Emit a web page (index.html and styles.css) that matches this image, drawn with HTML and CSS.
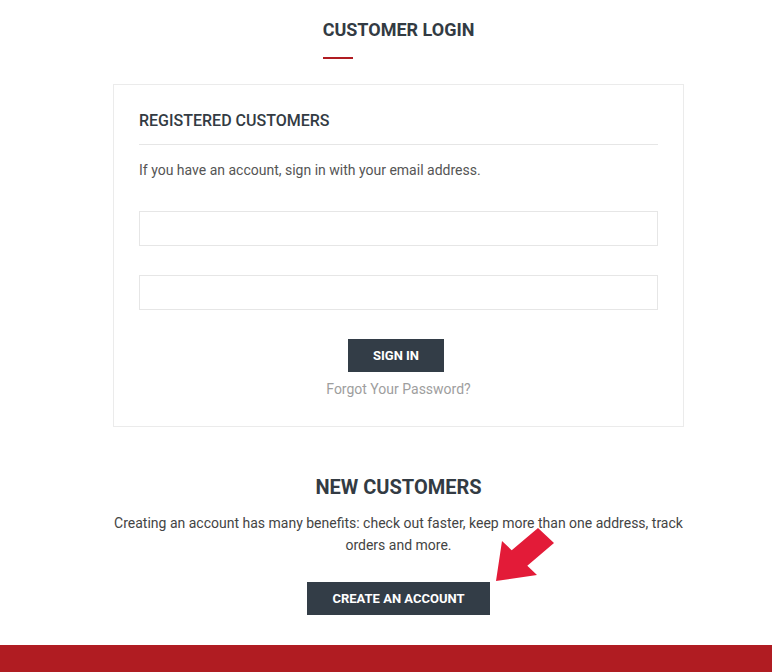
FILE: index.html
```html
<!DOCTYPE html>
<html>
<head>
<meta charset="utf-8">
<link rel="stylesheet" href="styles.css">
</head>
<body>
<main class="page">
  <div class="title-wrap">
    <h1 class="page-title">CUSTOMER LOGIN</h1>
  </div>
  <section class="login-box">
    <h2 class="box-title">REGISTERED CUSTOMERS</h2>
    <p class="box-note">If you have an account, sign in with your email address.</p>
    <div class="field"><input class="input" type="email" aria-label="Email"></div>
    <div class="field"><input class="input" type="password" aria-label="Password"></div>
    <div class="actions">
      <button class="btn btn-signin">SIGN IN</button>
      <a class="forgot" href="#">Forgot Your Password?</a>
    </div>
  </section>
  <section class="new-customers">
    <h2 class="new-title">NEW CUSTOMERS</h2>
    <p class="new-text">Creating an account has many benefits: check out faster, keep more than one address, track orders and more.</p>
    <div class="create-wrap">
      <button class="btn btn-create">CREATE AN ACCOUNT</button>
      <svg class="arrow" width="80" height="70" viewBox="0 0 80 70" aria-hidden="true">
        <polygon fill="#e31b38" points="6,61 12,21 21.7,30.2 48,8 64,23 37.3,45.8 47,55"/>
      </svg>
    </div>
  </section>
</main>
<footer class="footer"></footer>
</body>
</html>
```
FILE: styles.css
```css
* { box-sizing: border-box; }
html, body { margin: 0; padding: 0; background: #fff; }
body {
  font-family: Roboto, "Noto Sans", "Liberation Sans", sans-serif;
  color: #333;
  width: 772px;
  height: 672px;
  overflow: hidden;
  position: relative;
}
.page {
  width: 571px;
  margin-left: 113px;
  padding-top: 19px;
}
.title-wrap { text-align: center; }
.page-title {
  display: inline-block;
  margin: 0;
  font-size: 18px;
  line-height: 22px;
  font-weight: 700;
  color: #333b43;
  text-align: left;
}
.page-title::after {
  content: "";
  display: block;
  width: 30px;
  height: 2px;
  margin-top: 16px;
  background: #b01c22;
}
.login-box {
  margin-top: 25px;
  border: 1px solid #ebebeb;
  padding: 26px 25px 28px;
}
.box-title {
  margin: 0;
  font-size: 16px;
  line-height: 20px;
  font-weight: 500;
  color: #333b43;
  padding-bottom: 13px;
  border-bottom: 1px solid #e6e6e6;
}
.box-note {
  margin: 15px 0 0;
  font-size: 14px;
  line-height: 20px;
  color: #555;
}
.field { margin-top: 31px; }
.field + .field { margin-top: 29px; }
.input {
  display: block;
  width: 100%;
  height: 35px;
  border: 1px solid #e6e6e6;
  background: #fff;
  outline: none;
  margin: 0;
}
.actions {
  margin-top: 29px;
  display: flex;
  flex-direction: column;
  align-items: center;
}
.btn {
  border: 0;
  background: #333d47;
  color: #fff;
  font-family: Roboto, "Noto Sans", "Liberation Sans", sans-serif;
  font-weight: 700;
  font-size: 13px;
  height: 33px;
  padding: 0 25px;
  white-space: nowrap;
  cursor: pointer;
  margin: 0;
}
.btn-signin { margin-right: 5px; }
.forgot {
  margin-top: 8px;
  font-size: 14px;
  line-height: 18px;
  color: #9e9e9e;
  text-decoration: none;
}
.new-customers {
  margin-top: 48px;
  text-align: center;
}
.new-title {
  margin: 0;
  font-size: 20px;
  line-height: 24px;
  font-weight: 700;
  color: #333b43;
}
.new-text {
  margin: 13px 0 0;
  font-size: 14px;
  line-height: 22px;
  color: #444;
}
.create-wrap {
  position: relative;
  margin-top: 26px;
  display: flex;
  justify-content: center;
}
.btn-create { width: 183px; }
.arrow {
  position: absolute;
  left: 377px;
  top: -62px;
}
.footer {
  position: absolute;
  left: 0;
  right: 0;
  top: 645px;
  height: 27px;
  background: #b01c22;
}
```
